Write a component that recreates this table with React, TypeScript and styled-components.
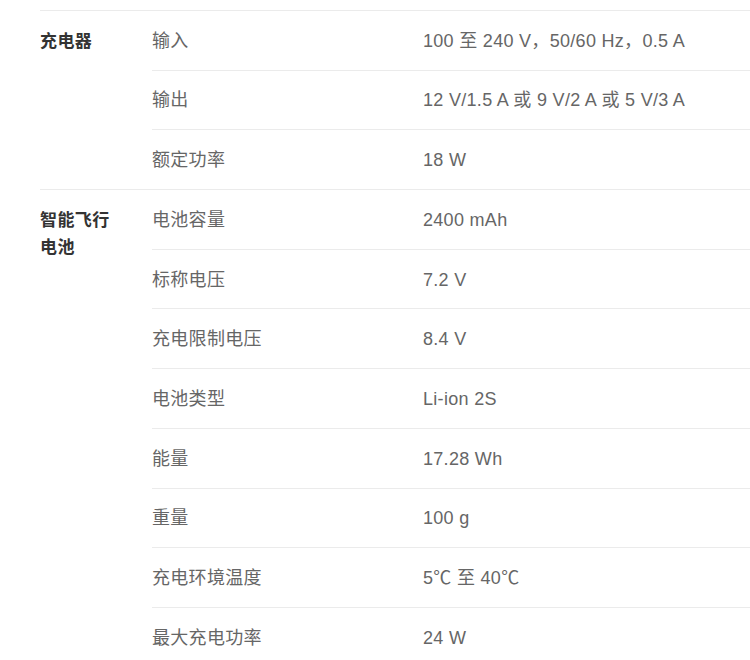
import React from "react";
import styled, { createGlobalStyle } from "styled-components";

const Global = createGlobalStyle`
  html, body { margin: 0; padding: 0; background: #fff; overflow: hidden; }
  body { font-family: "Liberation Sans", "Noto Sans CJK SC", sans-serif; }
`;

const Page = styled.div`
  padding: 10px 0 0 40px;
  width: 750px;
  box-sizing: border-box;
`;

const Group = styled.section`
  display: flex;
  border-top: 1px solid #ebebeb;
`;

const Category = styled.div`
  width: 74px;
  margin-right: 38px;
  flex: none;
  padding-top: 16.5px;
  font-size: 17px;
  letter-spacing: 0.4px;
  line-height: 27px;
  font-weight: 700;
  color: #333;
`;

const Rows = styled.div`
  flex: 1;
  display: flex;
  flex-direction: column;
`;

const Row = styled.div<{ $first?: boolean }>`
  display: flex;
  border-top: ${(p) => (p.$first ? "none" : "1px solid #ebebeb")};
  padding: 15.8px 0 14.9px;
  font-size: 18px;
  letter-spacing: 0.3px;
  line-height: 28px;
  color: #666;
`;

const Label = styled.div`
  width: 271px;
  flex: none;
`;

const Value = styled.div`
  flex: 1;
  white-space: nowrap;
`;

const groups = [
  {
    name: "充电器",
    rows: [
      ["输入", "100 至 240 V，50/60 Hz，0.5 A"],
      ["输出", "12 V/1.5 A 或 9 V/2 A 或 5 V/3 A"],
      ["额定功率", "18 W"],
    ],
  },
  {
    name: "智能飞行电池",
    rows: [
      ["电池容量", "2400 mAh"],
      ["标称电压", "7.2 V"],
      ["充电限制电压", "8.4 V"],
      ["电池类型", "Li-ion 2S"],
      ["能量", "17.28 Wh"],
      ["重量", "100 g"],
      ["充电环境温度", "5℃ 至 40℃"],
      ["最大充电功率", "24 W"],
    ],
  },
];

export default function App() {
  return (
    <Page>
      <Global />
      {groups.map((g) => (
        <Group key={g.name}>
          <Category>{g.name}</Category>
          <Rows>
            {g.rows.map(([l, v], i) => (
              <Row key={l} $first={i === 0}>
                <Label>{l}</Label>
                <Value>{v}</Value>
              </Row>
            ))}
          </Rows>
        </Group>
      ))}
    </Page>
  );
}
